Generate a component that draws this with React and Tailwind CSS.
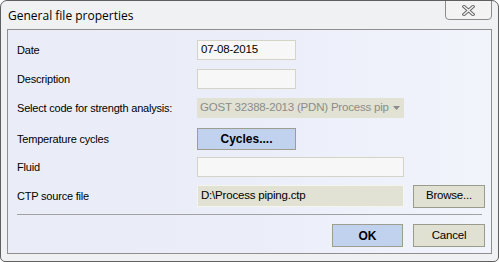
import React from 'react'

const labelCls = 'w-[180px] shrink-0 text-[11px] tracking-[-0.2px] text-black'
const inputCls = 'h-[20px] border border-[#d3d3c6] bg-[#f7f7f7] px-[3px] flex items-center text-[11.5px] tracking-[-0.2px] text-black'

export default function App() {
  return (
    <div
      className="relative w-[499px] h-[262px] overflow-hidden rounded-t-[7px] rounded-b-[5px] border border-[#5f5f5f] bg-[#f0f1f3] flex flex-col"
      style={{ fontFamily: '"Liberation Sans", Arial, sans-serif' }}
    >
      {/* title bar */}
      <div className="h-[28px] shrink-0 pl-[7px] pt-[1px] flex items-center">
        <span className="text-[12px] text-black" style={{ fontFamily: '"Open Sans", "Noto Sans", sans-serif' }}>
          General file properties
        </span>
      </div>

      {/* close button */}
      <div className="absolute top-[-1px] right-[6px] w-[47px] h-[20px] rounded-b-[4px] border border-[#8c8c8c] bg-[#f3f3f3] flex items-center justify-center">
        <svg width="13" height="11" viewBox="0 0 13 11">
          <path d="M2 1.5 L11 9.5 M11 1.5 L2 9.5" stroke="#6a6a6a" strokeWidth="3.4" strokeLinecap="square" />
          <path d="M2 1.5 L11 9.5 M11 1.5 L2 9.5" stroke="#f4f4f4" strokeWidth="1.4" strokeLinecap="square" />
        </svg>
      </div>

      {/* client area */}
      <div className="mx-[6px] h-[225px] border border-[#8e8e8e] bg-linear-to-r from-[#eaedf8] via-[#ebeef9] to-[#f2f4fc] pl-[9px] pr-[6px] pt-[10px] flex flex-col">
        <div className="flex items-center h-[20px]">
          <span className={labelCls}>Date</span>
          <div className={`${inputCls} w-[99px]`}>07-08-2015</div>
        </div>

        <div className="flex items-center h-[20px] mt-[9px]">
          <span className={labelCls}>Description</span>
          <div className={`${inputCls} w-[99px]`}></div>
        </div>

        <div className="flex items-center h-[20px] mt-[9px]">
          <span className={labelCls}>Select code for strength analysis:</span>
          <div className="w-[207px] h-[20px] bg-[#e1e1d4] pl-[3px] pr-[4px] flex items-center text-[11.5px] tracking-[-0.2px] text-[#8c8c8c]">
            <span className="flex-1 min-w-0 whitespace-nowrap overflow-hidden">GOST 32388-2013 (PDN) Process piping</span>
            <svg width="7" height="4" viewBox="0 0 7 4" className="ml-[4px] shrink-0">
              <path d="M0 0 H7 L3.5 4 Z" fill="#8c8c8c" />
            </svg>
          </div>
        </div>

        <div className="flex items-center h-[22px] mt-[10px]">
          <span className={labelCls}>Temperature cycles</span>
          <button className="w-[99px] h-[22px] border border-[#9d9d90] bg-[#c1d2ef] text-[12px] font-bold text-black">
            Cycles....
          </button>
        </div>

        <div className="flex items-center h-[20px] mt-[7px]">
          <span className={labelCls}>Fluid</span>
          <div className={`${inputCls} w-[207px]`}></div>
        </div>

        <div className="flex items-center h-[22px] mt-[8px]">
          <span className={labelCls}>CTP source file</span>
          <div className="w-[207px] h-[22px] border border-[#f5f5ee] bg-[#e1e1d4] px-[3px] flex items-center text-[11.5px] tracking-[-0.2px] text-black">
            D:\Process piping.ctp
          </div>
          <button className="ml-[9px] w-[72px] h-[23px] border border-[#9b9b8c] bg-[#e1e1d3] text-[11.5px] tracking-[-0.2px] text-black">
            Browse...
          </button>
        </div>

        <div className="mt-[7px] mr-[3px] h-px bg-[#a2a2a2]"></div>

        <div className="mt-[9px] flex justify-end gap-[10px]">
          <button className="w-[71px] h-[23px] border border-[#9d9d90] bg-[#c1d2ef] text-[12px] font-bold text-black">
            OK
          </button>
          <button className="w-[72px] h-[23px] border border-[#9b9b8c] bg-[#e1e1d3] text-[11.5px] tracking-[-0.2px] text-black">
            Cancel
          </button>
        </div>
      </div>
    </div>
  )
}
